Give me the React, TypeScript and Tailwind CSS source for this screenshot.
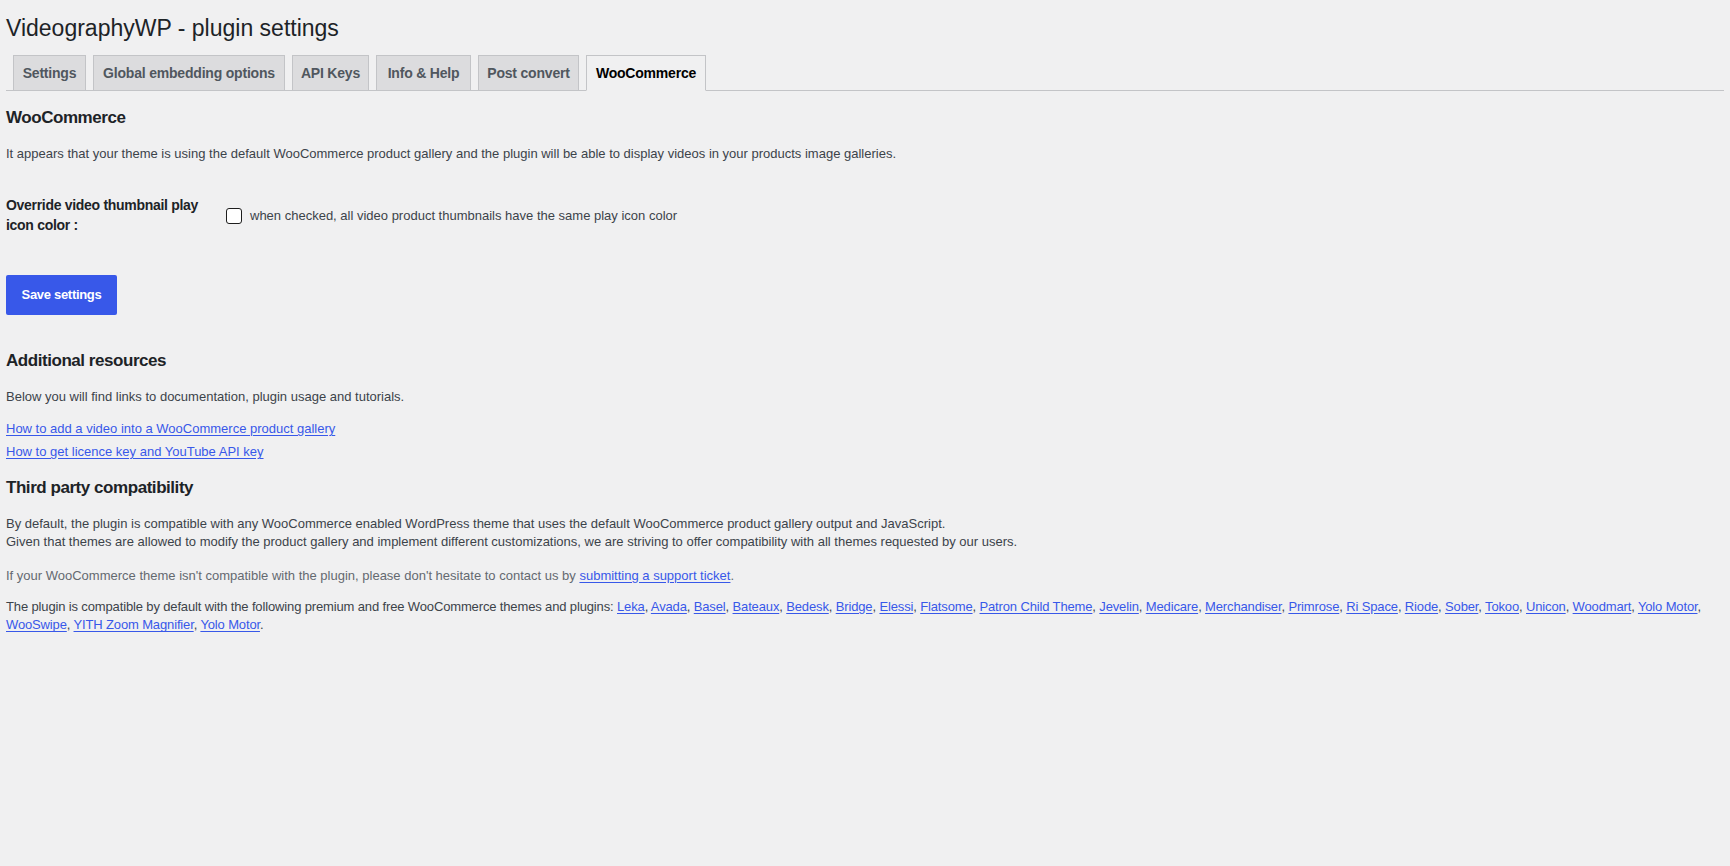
import React from "react";

const font = { fontFamily: '"Liberation Sans", Arial, sans-serif' };

const tabs = [
  { label: "Settings", w: "w-[73px]" },
  { label: "Global embedding options", w: "w-[192px]" },
  { label: "API Keys", w: "w-[77px]" },
  { label: "Info & Help", w: "w-[95px]" },
  { label: "Post convert", w: "w-[101px]" },
  { label: "WooCommerce", w: "w-[120px]", active: true },
];

const themes = [
  "Leka",
  "Avada",
  "Basel",
  "Bateaux",
  "Bedesk",
  "Bridge",
  "Elessi",
  "Flatsome",
  "Patron Child Theme",
  "Jevelin",
  "Medicare",
  "Merchandiser",
  "Primrose",
  "Ri Space",
  "Riode",
  "Sober",
  "Tokoo",
  "Unicon",
  "Woodmart",
  "Yolo Motor",
];
const themes2 = ["WooSwipe", "YITH Zoom Magnifier", "Yolo Motor"];

function A({ children }: { children: React.ReactNode }) {
  return <a href="#" className="text-[#3858e9] underline underline-offset-[2px]">{children}</a>;
}

export default function App() {
  return (
    <div className="min-h-[866px] w-full bg-[#f0f0f1] text-[#3c434a]" style={font}>
      <div className="px-[6px]">
        <h1 className="pt-[13px] pb-[3px] text-[23px] leading-[30px] font-normal text-[#1d2327]">
          VideographyWP - plugin settings
        </h1>
        <div className="flex pt-[9px] border-b border-[#c3c4c7]">
          {tabs.map((t) => (
            <div
              key={t.label}
              className={`${t.w} ml-[7px] -mb-px h-[36px] flex items-center justify-center border text-[14px] leading-[24px] font-semibold tracking-[-0.2px] whitespace-nowrap ${
                t.active
                  ? "bg-[#f0f0f1] border-[#c3c4c7] border-b-[#f0f0f1] text-black"
                  : "bg-[#dcdcde] border-[#c3c4c7] text-[#50575e]"
              }`}
            >
              {t.label}
            </div>
          ))}
        </div>

        <h2 className="mt-[16px] text-[17px] leading-[22px] font-semibold tracking-[-0.45px] text-[#1d2327]">
          WooCommerce
        </h2>
        <p className="mt-[15px] text-[13px] leading-[20px]">
          It appears that your theme is using the default WooCommerce product gallery and the plugin will be able to
          display videos in your products image galleries.
        </p>

        <div className="mt-[31px] flex items-start">
          <div className="w-[220px] shrink-0 pr-[10px] text-[14px] leading-[20px] font-semibold tracking-[-0.3px] text-[#1d2327]">
            Override video thumbnail play
            <br />
            icon color :
          </div>
          <label className="mt-[11px] flex h-[20px] items-center text-[13px]">
            <span className="mr-[8px] h-[16px] w-[16px] rounded-[3px] border border-[#1e1e1e] bg-white" />
            when checked, all video product thumbnails have the same play icon color
          </label>
        </div>

        <button className="mt-[40px] flex h-[40px] w-[111px] items-center justify-center rounded-[2px] bg-[#3858e9] text-[13px] font-semibold tracking-[-0.3px] text-white">
          Save settings
        </button>

        <h2 className="mt-[35px] text-[17px] leading-[22px] font-semibold tracking-[-0.45px] text-[#1d2327]">
          Additional resources
        </h2>
        <p className="mt-[15px] text-[13px] leading-[20px]">
          Below you will find links to documentation, plugin usage and tutorials.
        </p>
        <div className="mt-[12px] text-[13px] leading-[20px]">
          <A>How to add a video into a WooCommerce product gallery</A>
        </div>
        <div className="mt-[3px] text-[13px] leading-[20px]">
          <A>How to get licence key and YouTube API key</A>
        </div>

        <h2 className="mt-[15px] text-[17px] leading-[22px] font-semibold tracking-[-0.45px] text-[#1d2327]">
          Third party compatibility
        </h2>
        <p className="mt-[15.6px] text-[13px] leading-[18.4px]">
          By default, the plugin is compatible with any WooCommerce enabled WordPress theme that uses the default
          WooCommerce product gallery output and JavaScript.
          <br />
          Given that themes are allowed to modify the product gallery and implement different customizations, we are
          striving to offer compatibility with all themes requested by our users.
        </p>
        <p className="mt-[15.6px] text-[13px] leading-[18.4px] text-[#646970]">
          If your WooCommerce theme isn't compatible with the plugin, please don't hesitate to contact us by{" "}
          <A>submitting a support ticket</A>.
        </p>
        <p className="mt-[12.6px] text-[13px] leading-[18.4px] tracking-[-0.14px]">
          <span className="whitespace-nowrap">
            The plugin is compatible by default with the following premium and free WooCommerce themes and plugins:{" "}
            {themes.map((t, i) => (
              <React.Fragment key={t + i}>
                <A>{t}</A>
                {", "}
              </React.Fragment>
            ))}
          </span>
          <br />
          {themes2.map((t, i) => (
            <React.Fragment key={t + i}>
              <A>{t}</A>
              {i < themes2.length - 1 ? ", " : "."}
            </React.Fragment>
          ))}
        </p>
      </div>
    </div>
  );
}
